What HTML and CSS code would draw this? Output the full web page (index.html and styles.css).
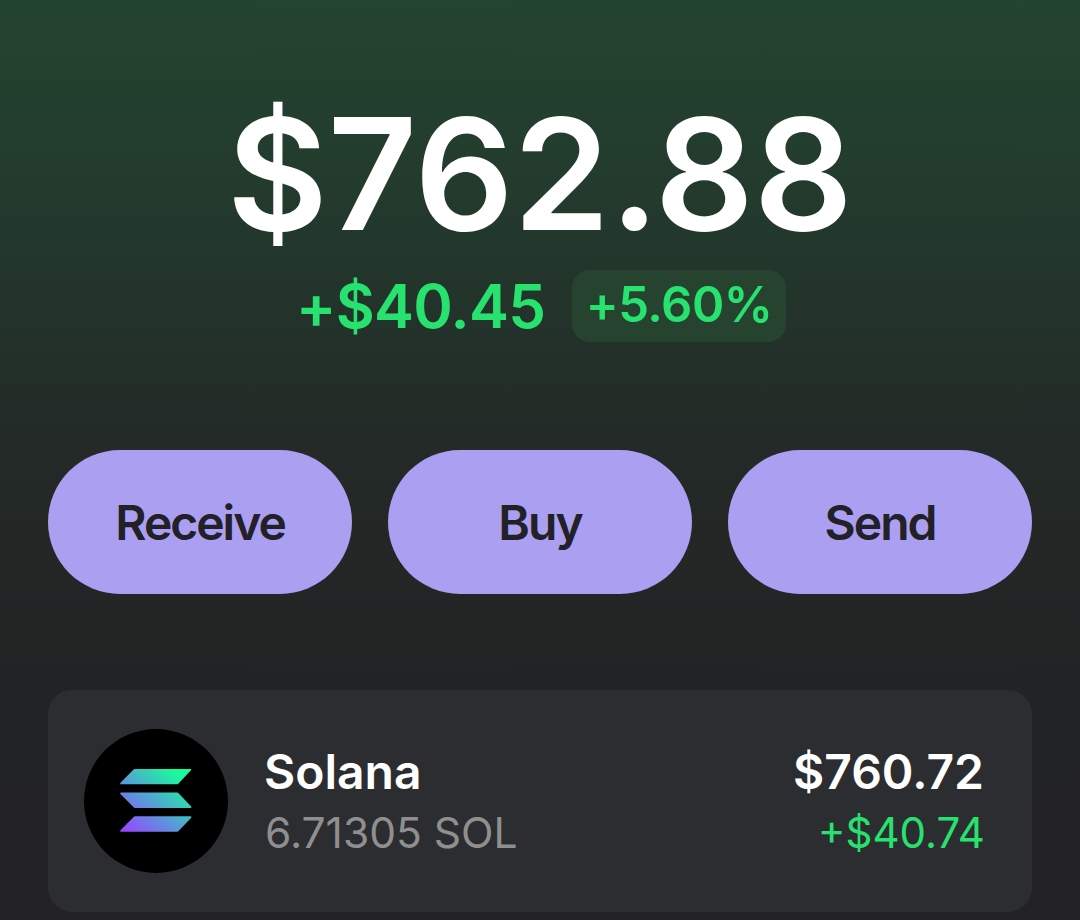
FILE: index.html
```html
<!DOCTYPE html>
<html lang="en">
<head>
<meta charset="utf-8">
<title>Wallet</title>
<link rel="stylesheet" href="styles.css">
</head>
<body>
<main class="screen">
  <h1 class="balance">$762.88</h1>
  <div class="change">
    <span class="change-amount">+$40.45</span>
    <span class="change-pill">+5.60%</span>
  </div>
  <div class="actions">
    <button class="action">Receive</button>
    <button class="action">Buy</button>
    <button class="action">Send</button>
  </div>
  <section class="token">
    <div class="token-icon">
      <svg width="72" height="64" viewBox="0 0 74 66" aria-hidden="true">
        <defs>
          <linearGradient id="g1" gradientUnits="userSpaceOnUse" x1="6" y1="66" x2="58" y2="4">
            <stop offset="0" stop-color="#9945ff"/>
            <stop offset="0.5" stop-color="#559fd6"/>
            <stop offset="1" stop-color="#19fb9b"/>
          </linearGradient>
        </defs>
        <path fill="url(#g1)" d="M14.2 .3a1.6 1.6 0 0 1 1.1-.5h57a.9.9 0 0 1 .7 1.500L60 15.200a1.600 1.600 0 0 1-1.100.5H1a.9.9 0 0 1-.7-1.500z"/>
        <path fill="url(#g1)" d="M60 24.700a1.600 1.600 0 0 0-1.100-.5H1a.9.9 0 0 0-.7 1.500l13.900 13.900a1.600 1.600 0 0 0 1.100.5h57.300a.9.9 0 0 0 .7-1.500z"/>
        <path fill="url(#g1)" d="M14.200 49.300a1.600 1.600 0 0 1 1.100-.5h57.300a.9.9 0 0 1 .7 1.500L60 64.200a1.600 1.600 0 0 1-1.100.5H1a.9.9 0 0 1-.7-1.500z"/>
      </svg>
    </div>
    <div class="token-name">
      <div class="token-title">Solana</div>
      <div class="token-sub">6.71305 SOL</div>
    </div>
    <div class="token-values">
      <div class="token-title">$760.72</div>
      <div class="token-gain">+$40.74</div>
    </div>
  </section>
</main>
</body>
</html>
```
FILE: styles.css
```css
* { box-sizing: border-box; }
html, body { margin: 0; padding: 0; height: 100%; }
body {
  background: linear-gradient(180deg, #234430 0%, #233a2d 200px, #232a27 450px, #222324 680px, #222224 100%);
  font-family: Inter, "Noto Sans", sans-serif;
  overflow: hidden;
}
.screen {
  display: flex;
  flex-direction: column;
  align-items: center;
  height: 920px;
  padding: 87px 48px 0;
}
.balance {
  margin: 0;
  font-size: 155px;
  line-height: 174px;
  font-weight: 640;
  letter-spacing: -0.2px;
  color: #fff;
}
.change {
  display: flex;
  align-items: center;
  gap: 27px;
  margin-top: 9px;
  padding-left: 2px;
  height: 72px;
}
.change-amount {
  font-size: 60px;
  font-weight: 640;
  letter-spacing: -0.7px;
  color: #27e26f;
}
.change-pill {
  display: flex;
  align-items: center;
  height: 72px;
  padding: 0 13.500px 4px;
  border-radius: 18px;
  background: #25432f;
  font-size: 49px;
  font-weight: 620;
  letter-spacing: -0.5px;
  color: #27e26f;
}
.actions {
  display: flex;
  gap: 36px;
  width: 100%;
  margin-top: 108px;
}
.action {
  flex: 1;
  height: 144px;
  border: 0;
  border-radius: 72px;
  background: #ab9ff2;
  color: #222127;
  font-family: inherit;
  font-size: 48px;
  font-weight: 600;
  letter-spacing: -2px;
}
.token {
  display: flex;
  align-items: center;
  width: 100%;
  height: 222px;
  margin-top: 96px;
  padding: 0 48px 0 36px;
  border-radius: 24px;
  background: #2c2d30;
}
.token-icon {
  display: flex;
  align-items: center;
  justify-content: center;
  width: 144px;
  height: 144px;
  border-radius: 50%;
  background: #000;
  flex: none;
}
.token-name { margin-left: 36px; flex: 1; padding-top: 3px; }
.token-values { text-align: right; padding-top: 3px; }
.token-title {
  font-size: 48px;
  line-height: 58px;
  font-weight: 600;
  color: #fff;
}
.token-sub {
  margin-top: 3px;
  padding-left: 1px;
  font-size: 42.500px;
  line-height: 58px;
  color: #8f8f8f;
}
.token-gain {
  margin-top: 3px;
  margin-right: -1px;
  font-size: 42px;
  line-height: 58px;
  color: #27e26f;
}
```
